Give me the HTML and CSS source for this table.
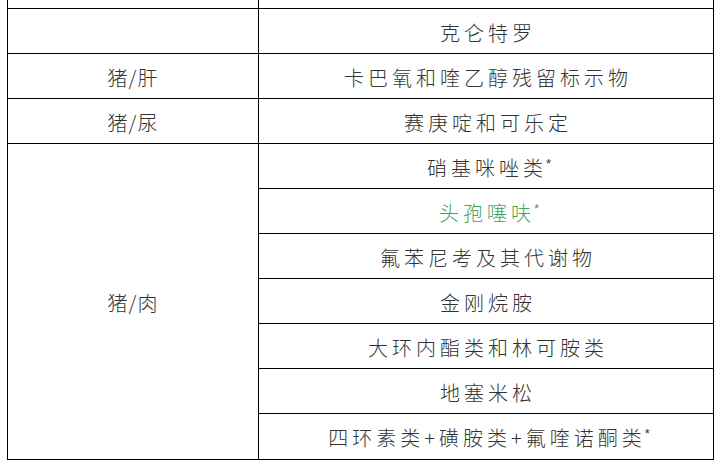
FILE: index.html
```html
<!DOCTYPE html>
<html lang="zh-CN">
<head>
<meta charset="utf-8">
<title>检测项目</title>
<link rel="stylesheet" href="styles.css">
</head>
<body>
<div class="table">
  <div class="cell left top"></div>
  <div class="cell right top"></div>

  <div class="cell left"></div>
  <div class="cell right"><span class="txt">克仑特罗</span></div>

  <div class="cell left"><span class="txt">猪/肝</span></div>
  <div class="cell right"><span class="txt">卡巴氧和喹乙醇残留标示物</span></div>

  <div class="cell left"><span class="txt">猪/尿</span></div>
  <div class="cell right"><span class="txt">赛庚啶和可乐定</span></div>

  <div class="cell left span7"><span class="txt">猪/肉</span></div>
  <div class="cell right"><span class="txt">硝基咪唑类</span><span class="star">*</span></div>
  <div class="cell right green"><span class="txt">头孢噻呋</span><span class="star">*</span></div>
  <div class="cell right"><span class="txt">氟苯尼考及其代谢物</span></div>
  <div class="cell right"><span class="txt">金刚烷胺</span></div>
  <div class="cell right"><span class="txt">大环内酯类和林可胺类</span></div>
  <div class="cell right"><span class="txt">地塞米松</span></div>
  <div class="cell right"><span class="txt">四环素类+磺胺类+氟喹诺酮类</span><span class="star">*</span></div>
</div>
</body>
</html>
```

FILE: styles.css
```css
html, body {
  margin: 0;
  padding: 0;
  background: #ffffff;
}

body {
  font-family: "Noto Sans CJK SC", "Noto Sans", sans-serif;
  font-weight: 300;
  color: #333333;
}

.table {
  margin-left: 7px;
  width: 707px;
  box-sizing: border-box;
  border-left: 1px solid #000;
  border-right: 1px solid #000;
  display: grid;
  grid-template-columns: 251px 454px;
  grid-template-rows: 9px repeat(9, 45px) 46px;
}

.cell {
  box-sizing: border-box;
  border-bottom: 1px solid #000;
  display: flex;
  align-items: center;
  justify-content: center;
  font-size: 20px;
  line-height: 1;
  padding-top: 3px;
  white-space: nowrap;
}

.top {
  padding-top: 0;
}

.left {
  border-right: 1px solid #000;
  letter-spacing: 1px;
  grid-column: 1;
}

.right {
  grid-column: 2;
  letter-spacing: 4px;
}

.right .txt {
  margin-right: -4px;
}

.span7 {
  grid-row: 5 / span 7;
}

.green {
  color: #3fa35a;
}

.star {
  font-family: "Liberation Sans", sans-serif;
  font-weight: 400;
  font-size: 13px;
  line-height: 1;
  letter-spacing: 0;
  align-self: flex-start;
  margin-top: 10px;
  margin-left: 3px;
  margin-right: -6px;
}
```
